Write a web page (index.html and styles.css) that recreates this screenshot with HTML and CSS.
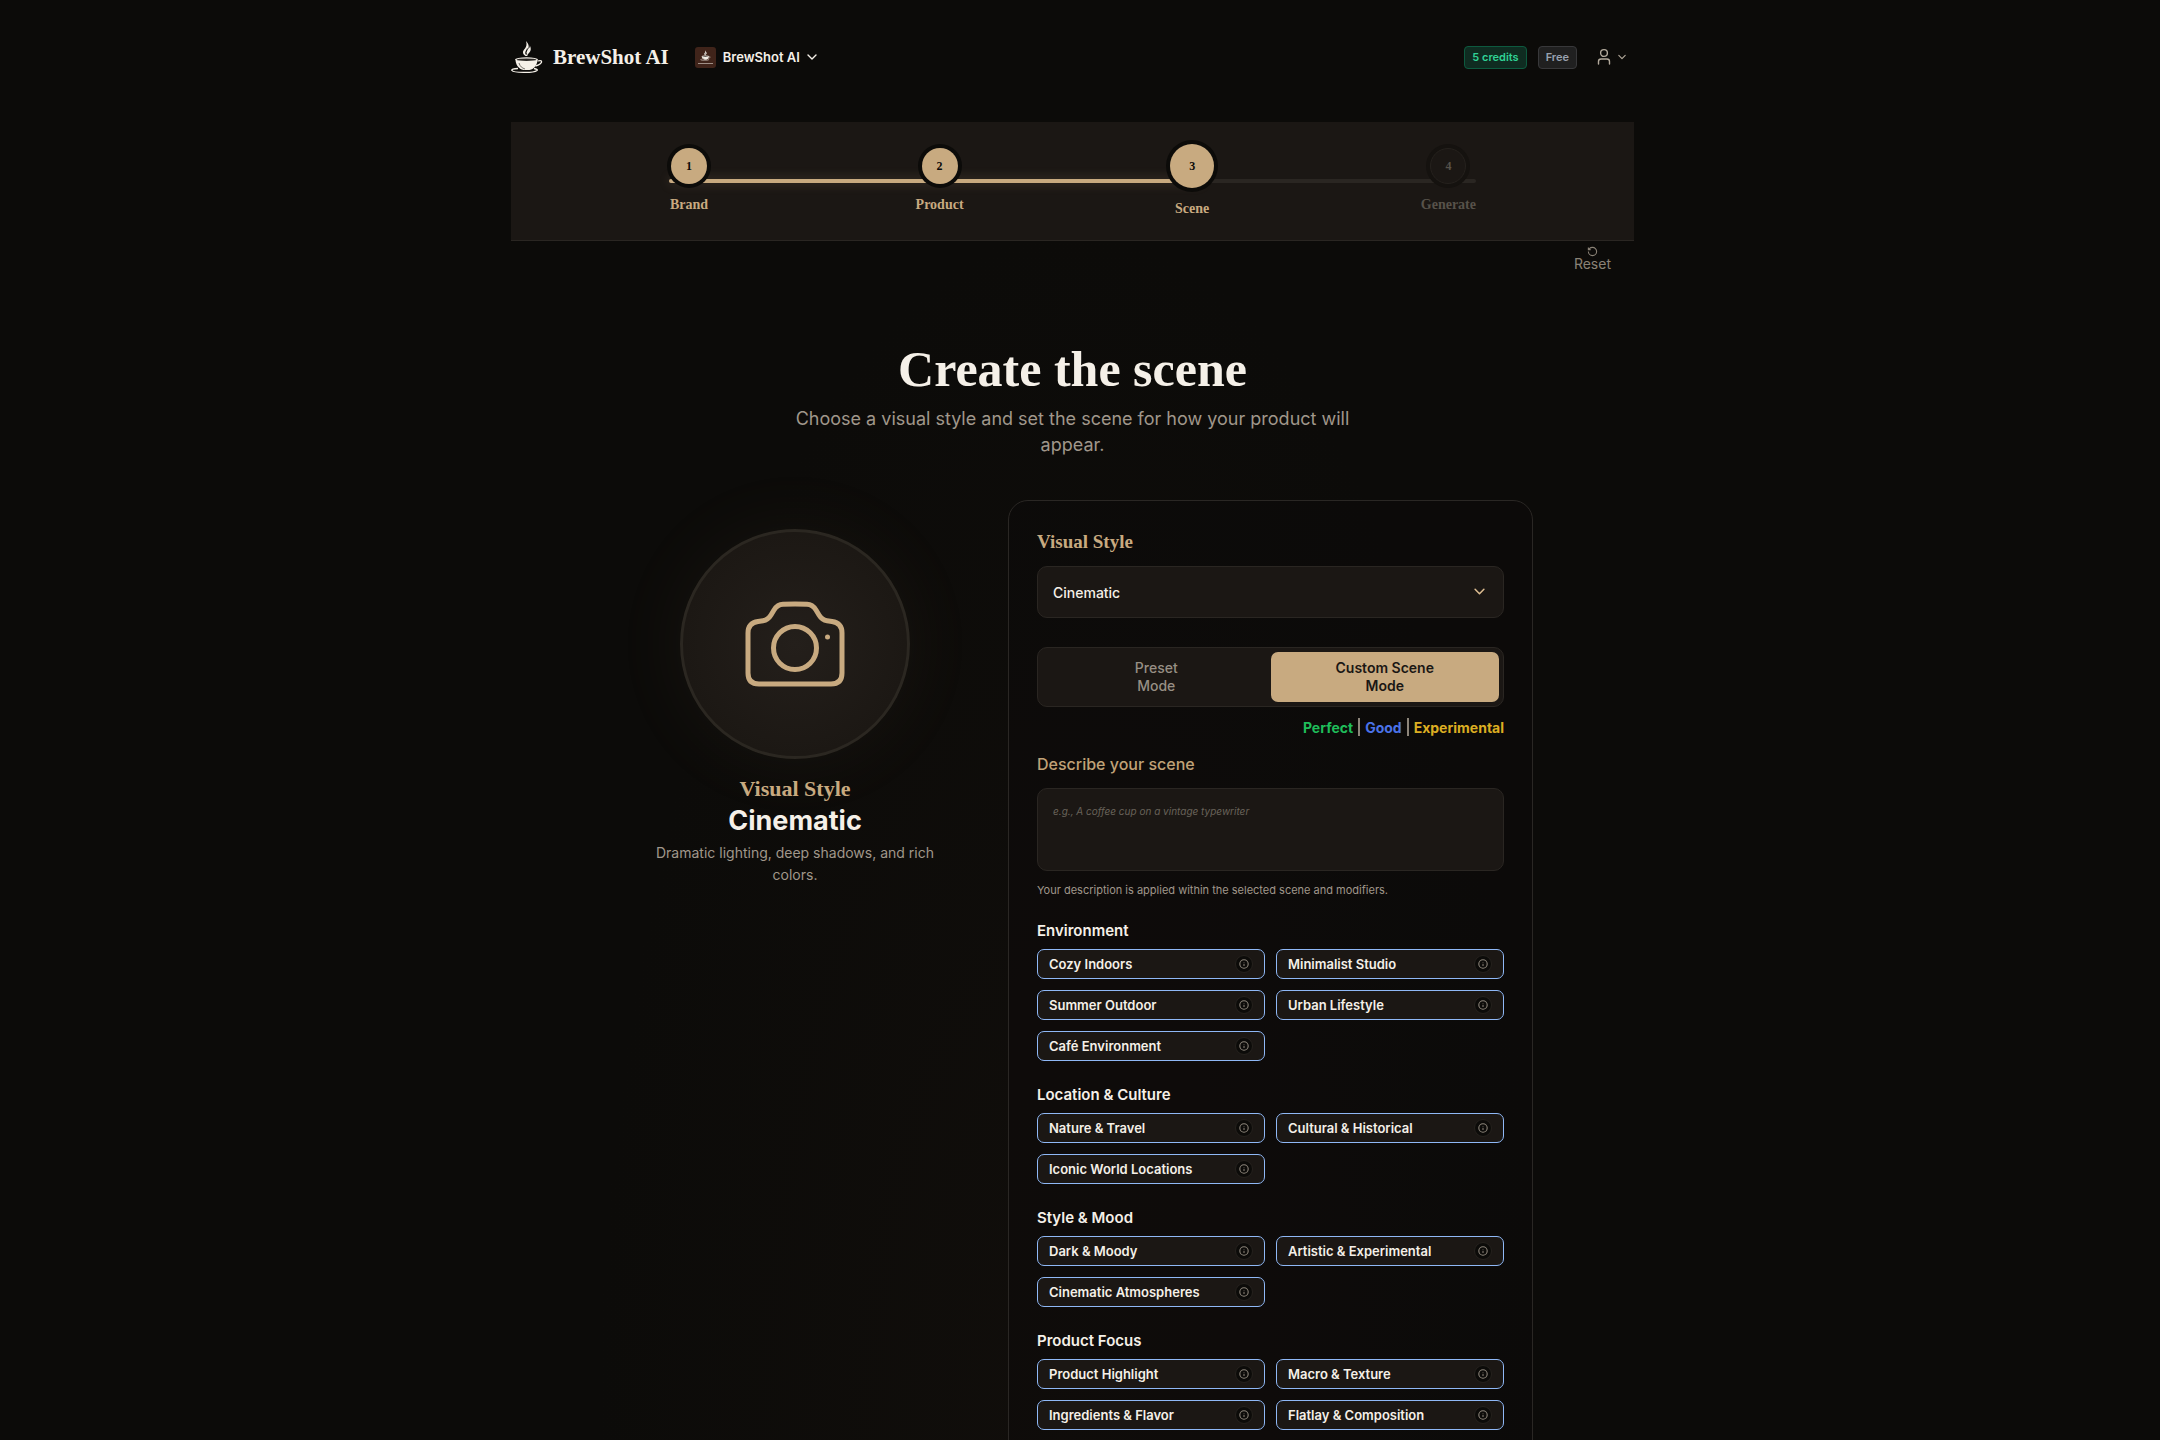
FILE: index.html
```html
<!DOCTYPE html>
<html lang="en">
<head>
  <meta charset="UTF-8">
  <meta name="viewport" content="width=device-width, initial-scale=1.0">
  <title>BrewShot AI - Create the scene</title>
  <link rel="stylesheet" href="styles.css">
</head>
<body>
  <svg class="sprite" aria-hidden="true">
    <symbol id="chevron" viewBox="0 0 10 10">
      <path d="M1 3l4 4 4-4" fill="none" stroke="currentColor" stroke-width="1.4" stroke-linecap="round" stroke-linejoin="round"/>
    </symbol>
    <symbol id="info" viewBox="0 0 10 10">
      <circle cx="5" cy="5" r="4.2" fill="none" stroke="currentColor" stroke-width="1.1"/>
      <path d="M5 4.8v2.2M5 3v.5" fill="none" stroke="currentColor" stroke-width="1"/>
    </symbol>
    <symbol id="cup" viewBox="0 0 32 34">
      <path d="M14.500 16c-3.500-2.500-3-5-.5-7.500 1.500-2 2-4 1-7.500 2.500 3 3.500 5 2 8 1.500-1 2-2 1.800-3.500 1.700 3.500 1 5.500-.8 7.500-1 1-2 2-1.500 3z" fill="currentColor"/>
      <path d="M15.500 14.500c-2-2 .5-3.500 1-6" fill="none" stroke="#0c0b09" stroke-width="1.200"/>
      <path d="M4.500 19.500c0 5 3 9.500 8 10.500h6c5-1 8-5.500 8-10.500z" fill="currentColor"/>
      <ellipse cx="15.500" cy="19.500" rx="11.500" ry="2.200" fill="currentColor"/>
      <ellipse cx="15.500" cy="19.700" rx="10" ry="1.300" fill="#2b2825"/>
      <path d="M26.500 21c5-1.500 5 1 2.500 3-1.500 1.300-3 1.700-4.500 2" fill="none" stroke="currentColor" stroke-width="1.300"/>
      <path d="M8 23c1 3.500 3 5 6 6" fill="none" stroke="#77736d" stroke-width="1"/>
      <path d="M7 28.500c-4.500 0-7 1-6 2 1.500 2.200 21 3 25 0 1-1-.5-1.500-3-2" fill="none" stroke="currentColor" stroke-width="1.300"/>
    </symbol>
  </svg>

  <div class="page">
    <header class="header">
      <a class="logo" href="#">
        <svg class="logo-cup"><use href="#cup"/></svg>
        <span>BrewShot AI</span>
      </a>
      <button class="brand-switch" type="button">
        <span class="brand-thumb">
          <svg><use href="#cup"/></svg>
          <i></i>
        </span>
        BrewShot AI
        <svg class="chevron"><use href="#chevron"/></svg>
      </button>
      <div class="account">
        <span class="badge credits">5 credits</span>
        <span class="badge plan">Free</span>
        <button class="user-menu" type="button" aria-label="Account">
          <svg class="user-icon" viewBox="0 0 14 18" fill="none" stroke="currentColor" stroke-width="1.4" stroke-linecap="round">
            <circle cx="7" cy="5" r="3.4"/>
            <path d="M1.500 16v-2.500q0-2.500 2.500-2.500h6q2.500 0 2.500 2.500V16"/>
          </svg>
          <svg class="chevron small"><use href="#chevron"/></svg>
        </button>
      </div>
    </header>

    <nav class="stepper">
      <ol class="steps">
        <li class="step done"><span class="dot">1</span><span class="step-name">Brand</span></li>
        <li class="step done"><span class="dot">2</span><span class="step-name">Product</span></li>
        <li class="step current"><span class="dot">3</span><span class="step-name">Scene</span></li>
        <li class="step todo"><span class="dot">4</span><span class="step-name">Generate</span></li>
      </ol>
    </nav>

    <div class="reset-row">
      <button class="reset" type="button">
        <svg viewBox="0 0 24 24" fill="none" stroke="currentColor" stroke-width="2.400">
          <path d="M3 12a9 9 0 1 0 9-9 9.750 9.750 0 0 0-6.740 2.740L3 8M3 3v5h5"/>
        </svg>
        Reset
      </button>
    </div>

    <main>
      <div class="intro">
        <h1>Create the scene</h1>
        <p>Choose a visual style and set the scene for how your product will appear.</p>
      </div>

      <div class="columns">
        <section class="preview">
          <div class="preview-circle">
            <svg viewBox="0 0 100 86" fill="none" stroke="currentColor" stroke-width="5" stroke-linecap="round" stroke-linejoin="round">
              <path d="M3 32Q3 22 13 20.500L18 19.700Q23 19 26 14L29 9Q32.500 3.500 38 3.300Q50 2.700 62 3.300Q67.500 3.500 71 9L74 14Q77 19 82 19.700L87 20.500Q97 22 97 32V72Q97 83 86 83H14Q3 83 3 72Z"/>
              <circle cx="50" cy="47" r="21.500"/>
              <circle cx="82.500" cy="36" r="2.500" fill="currentColor" stroke="none"/>
            </svg>
          </div>
          <p class="preview-label">Visual Style</p>
          <h2>Cinematic</h2>
          <p class="preview-text">Dramatic lighting, deep shadows, and rich colors.</p>
        </section>

        <form class="panel">
          <label class="panel-title" for="visual-style">Visual Style</label>
          <div class="select-box">
            <select id="visual-style">
              <option>Cinematic</option>
            </select>
            <svg class="chevron"><use href="#chevron"/></svg>
          </div>

          <div class="modes">
            <button type="button">Preset<br>Mode</button>
            <button type="button" class="active">Custom Scene<br>Mode</button>
          </div>

          <p class="legend">
            <span class="perfect">Perfect</span>
            <i></i>
            <span class="good">Good</span>
            <i></i>
            <span class="experimental">Experimental</span>
          </p>

          <label class="describe" for="scene-text">Describe your scene</label>
          <textarea id="scene-text" placeholder="e.g., A coffee cup on a vintage typewriter"></textarea>
          <p class="help">Your description is applied within the selected scene and modifiers.</p>

          <section class="group">
            <h3>Environment</h3>
            <div class="chips">
              <button type="button">Cozy Indoors<span class="info"><svg><use href="#info"/></svg></span></button>
              <button type="button">Minimalist Studio<span class="info"><svg><use href="#info"/></svg></span></button>
              <button type="button">Summer Outdoor<span class="info"><svg><use href="#info"/></svg></span></button>
              <button type="button">Urban Lifestyle<span class="info"><svg><use href="#info"/></svg></span></button>
              <button type="button">Café Environment<span class="info"><svg><use href="#info"/></svg></span></button>
            </div>
          </section>

          <section class="group">
            <h3>Location &amp; Culture</h3>
            <div class="chips">
              <button type="button">Nature &amp; Travel<span class="info"><svg><use href="#info"/></svg></span></button>
              <button type="button">Cultural &amp; Historical<span class="info"><svg><use href="#info"/></svg></span></button>
              <button type="button">Iconic World Locations<span class="info"><svg><use href="#info"/></svg></span></button>
            </div>
          </section>

          <section class="group">
            <h3>Style &amp; Mood</h3>
            <div class="chips">
              <button type="button">Dark &amp; Moody<span class="info"><svg><use href="#info"/></svg></span></button>
              <button type="button">Artistic &amp; Experimental<span class="info"><svg><use href="#info"/></svg></span></button>
              <button type="button">Cinematic Atmospheres<span class="info"><svg><use href="#info"/></svg></span></button>
            </div>
          </section>

          <section class="group">
            <h3>Product Focus</h3>
            <div class="chips">
              <button type="button">Product Highlight<span class="info"><svg><use href="#info"/></svg></span></button>
              <button type="button">Macro &amp; Texture<span class="info"><svg><use href="#info"/></svg></span></button>
              <button type="button">Ingredients &amp; Flavor<span class="info"><svg><use href="#info"/></svg></span></button>
              <button type="button">Flatlay &amp; Composition<span class="info"><svg><use href="#info"/></svg></span></button>
            </div>
          </section>
        </form>
      </div>
    </main>
  </div>
</body>
</html>
```

FILE: styles.css
```css
:root {
  --bg: #0c0b09;
  --card: #1b1714;
  --line: #2a2622;
  --gold: #c8aa80;
  --text: #f5f0e8;
  --muted: #a0978b;
  --serif: "Liberation Serif", serif;
}
* {
  box-sizing: border-box;
}
body {
  margin: 0;
  padding-right: 15px;
  height: 100vh;
  overflow: hidden;
  background: var(--bg);
  color: var(--text);
  font-family: Inter, sans-serif;
  font-size: 14px;
}
h1, h2, h3, p, ol {
  margin: 0;
  padding: 0;
}
button {
  margin: 0;
  padding: 0;
  border: none;
  background: none;
  color: inherit;
  font-family: inherit;
  cursor: pointer;
}
.sprite {
  display: none;
}
.page {
  max-width: 1123px;
  min-height: 100vh;
  margin: 0 auto;
  background: radial-gradient(ellipse at 50% 100%, #110e0b 0%, var(--bg) 60%);
}
.chevron {
  width: 10px;
  height: 10px;
}
.chevron.small {
  width: 8px;
  height: 8px;
}

/* header */
.header {
  display: flex;
  align-items: center;
  padding: 40px 8px 48px 0;
  height: 122px;
}
.logo {
  display: flex;
  align-items: center;
  gap: 10px;
  color: var(--text);
  font: bold 21px var(--serif);
  text-decoration: none;
}
.logo-cup {
  width: 32px;
  height: 34px;
}
.brand-switch {
  display: flex;
  align-items: center;
  gap: 7px;
  margin-left: 26px;
  font-size: 13px;
  font-weight: 600;
}
.brand-thumb {
  display: flex;
  flex-direction: column;
  align-items: center;
  justify-content: center;
  gap: 2px;
  width: 21px;
  height: 21px;
  border-radius: 3px;
  background: #40241a;
}
.brand-thumb svg {
  width: 11px;
  height: 11px;
}
.brand-thumb i {
  width: 15px;
  height: 1px;
  background: #a08f86;
}
.account {
  display: flex;
  align-items: center;
  gap: 11px;
  margin-left: auto;
}
.badge {
  height: 23px;
  padding: 0 7px;
  border: 1px solid;
  border-radius: 4px;
  font-size: 11px;
  font-weight: 600;
  line-height: 20px;
}
.credits {
  background: #0f2c21;
  border-color: #0d5a3f;
  color: #2fd296;
}
.plan {
  background: #202020;
  border-color: #38383a;
  color: #99a2b0;
}
.user-menu {
  display: flex;
  align-items: center;
  gap: 7px;
  margin-left: 9px;
  color: #b3aa9c;
}
.user-icon {
  width: 14px;
  height: 18px;
}

/* stepper */
.stepper {
  height: 119px;
  padding: 26px 158px 0;
  background: var(--card);
  border-bottom: 1px solid var(--line);
}
.steps {
  position: relative;
  display: flex;
  justify-content: space-between;
  list-style: none;
}
.steps::before,
.steps::after {
  content: "";
  position: absolute;
  top: 31px;
  left: 0;
  width: 100%;
  height: 4px;
  border-radius: 2px;
  background: var(--line);
}
.steps::after {
  width: 66%;
  background: var(--gold);
  box-shadow: 0 0 12px rgba(200, 170, 128, 0.3);
}
.step {
  position: relative;
  z-index: 1;
  display: flex;
  flex-direction: column;
  align-items: center;
  min-width: 40px;
  color: var(--gold);
  font: bold 14px/18px var(--serif);
}
.dot {
  display: flex;
  align-items: center;
  justify-content: center;
  width: 36px;
  height: 36px;
  margin-bottom: 12px;
  border-radius: 50%;
  background: var(--gold);
  box-shadow: 0 0 0 4px var(--bg);
  color: var(--bg);
  font-size: 12px;
}
.current .dot {
  width: 44px;
  height: 44px;
  margin-top: -4px;
}
.todo {
  color: #57524a;
}
.todo .dot {
  background: var(--card);
  border: 1px solid #25211d;
  box-shadow: 0 0 0 4px #15120f;
  color: #57524a;
}

.reset-row {
  display: flex;
  justify-content: flex-end;
  padding: 5px 23px 0;
  height: 98px;
}
.reset {
  display: flex;
  flex-direction: column;
  align-items: center;
  align-self: flex-start;
  color: #8a8276;
  font-size: 14px;
  line-height: 14px;
}
.reset svg {
  width: 11px;
  height: 11px;
}

/* intro */
.intro {
  max-width: 580px;
  margin: 0 auto 42px;
  text-align: center;
}
.intro h1 {
  margin-bottom: 7px;
  font: bold 50px/60px var(--serif);
}
.intro p {
  color: var(--muted);
  font-size: 18px;
  line-height: 26px;
}

.columns {
  display: grid;
  grid-template-columns: 366fr 525fr;
  gap: 30px;
  padding: 0 101px;
}

/* left column */
.preview {
  display: flex;
  flex-direction: column;
  align-items: center;
  padding: 29px 30px;
  text-align: center;
}
.preview-circle {
  display: flex;
  align-items: center;
  justify-content: center;
  width: 230px;
  height: 230px;
  margin-bottom: 17px;
  border: 3px solid #2b2721;
  border-radius: 50%;
  background: radial-gradient(circle, #241f1b 0%, #1c1814 70%);
  box-shadow: 0 0 80px rgba(200, 170, 128, 0.06);
  color: var(--gold);
}
.preview-circle svg {
  width: 100px;
  height: 86px;
}
.preview-label {
  color: var(--gold);
  font: bold 22px/26px var(--serif);
}
.preview h2 {
  margin: 2px 0 4px;
  font-size: 27px;
  font-weight: 700;
  line-height: 34px;
}
.preview-text {
  color: var(--muted);
  font-size: 14px;
  line-height: 22px;
}

/* right column */
.panel {
  padding: 28px;
  border: 1px solid #2a2724;
  border-radius: 20px;
  background: rgba(12, 11, 9, 0.4);
}
.panel-title {
  display: block;
  margin-bottom: 11px;
  color: var(--gold);
  font: bold 19px/26px var(--serif);
}
.select-box {
  position: relative;
  margin-bottom: 29px;
}
.select-box select {
  display: block;
  width: 100%;
  height: 52px;
  padding: 0 15px;
  appearance: none;
  border: 1px solid var(--line);
  border-radius: 10px;
  background: var(--card);
  color: var(--text);
  font: 500 14px Inter, sans-serif;
}
.select-box .chevron {
  position: absolute;
  top: 20px;
  right: 19px;
  width: 11px;
  height: 11px;
  color: #dcbc91;
  pointer-events: none;
}
.modes {
  display: grid;
  grid-template-columns: 1fr 1fr;
  padding: 4px;
  margin-bottom: 10px;
  border: 1px solid var(--line);
  border-radius: 10px;
  background: var(--card);
}
.modes button {
  height: 50px;
  border-radius: 7px;
  color: #978f84;
  font-size: 14px;
  font-weight: 500;
  line-height: 18px;
}
.modes .active {
  background: var(--gold);
  color: #1b1714;
  font-weight: 600;
}
.legend {
  display: flex;
  align-items: center;
  justify-content: flex-end;
  gap: 5px;
  height: 20px;
  margin-bottom: 16px;
  font-size: 14px;
  font-weight: 700;
}
.legend i {
  width: 2px;
  height: 18px;
  background: #8d857a;
}
.perfect {
  color: #1fbd5a;
}
.good {
  color: #4a72e8;
}
.experimental {
  color: #dcae22;
}
.describe {
  display: block;
  margin-bottom: 13px;
  color: #c0a277;
  font-size: 16px;
  font-weight: 500;
  line-height: 22px;
}
.panel textarea {
  display: block;
  width: 100%;
  height: 83px;
  padding: 15px;
  resize: none;
  border: 1px solid var(--line);
  border-radius: 10px;
  background: var(--card);
  color: var(--text);
  font: 10px/14px Inter, sans-serif;
}
.panel textarea::placeholder {
  color: #69635a;
  font-style: italic;
}
.help {
  margin: 11px 0 22px;
  color: var(--muted);
  font-size: 11px;
  line-height: 16px;
}
.group {
  margin-bottom: 23px;
}
.group h3 {
  margin-bottom: 7px;
  font-size: 15px;
  font-weight: 600;
  line-height: 22px;
}
.chips {
  display: grid;
  grid-template-columns: 1fr 1fr;
  gap: 11px;
}
.chips button {
  display: flex;
  align-items: center;
  justify-content: space-between;
  height: 30px;
  padding: 0 11px;
  border: 1px solid #8fb8f6;
  border-radius: 7px;
  background: var(--card);
  font-size: 13px;
  font-weight: 600;
}
.info {
  display: flex;
  align-items: center;
  justify-content: center;
  width: 18px;
  height: 18px;
  border: 1px solid #25211d;
  border-radius: 50%;
  background: var(--bg);
  color: #8d857a;
}
.info svg {
  width: 10px;
  height: 10px;
}
```
